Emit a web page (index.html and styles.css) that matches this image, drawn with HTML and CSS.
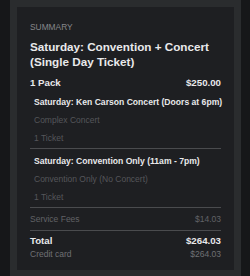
FILE: index.html
```html
<!DOCTYPE html>
<html lang="en">
<head>
  <meta charset="UTF-8" />
  <meta name="viewport" content="width=device-width, initial-scale=1" />
  <title>Order Summary</title>
  <link rel="stylesheet" href="styles.css">
</head>
<body>
  <div class="frame">
    <div class="summary-card">
      <div class="summary-label">SUMMARY</div>
      <h2 class="event-title">Saturday: Convention + Concert (Single Day Ticket)</h2>

      <div class="row pack-row">
        <span>1 Pack</span>
        <span>$250.00</span>
      </div>

      <!-- items dentro del pack -->
      <div class="pack-item">
        <div class="item-name">Saturday: Ken Carson Concert (Doors at 6pm)</div>
        <div class="item-sub">Complex Concert</div>
        <div class="item-sub">1 Ticket</div>
      </div>
      <div class="pack-item">
        <div class="item-name">Saturday: Convention Only (11am - 7pm)</div>
        <div class="item-sub">Convention Only (No Concert)</div>
        <div class="item-sub">1 Ticket</div>
      </div>

      <div class="row fees-row">
        <span>Service Fees</span>
        <span>$14.03</span>
      </div>

      <div class="totals">
        <div class="row total-row">
          <span>Total</span>
          <span>$264.03</span>
        </div>
        <div class="row method-row">
          <span>Credit card</span>
          <span>$264.03</span>
        </div>
      </div>
    </div>
  </div>
</body>
</html>
```

FILE: styles.css
```css
body {
  margin: 0;
  background: #161719;
  font-family: "Liberation Sans", Arial, sans-serif;
  color: #e9e9eb;
}

.frame {
  margin: 0 9px 0 10px;
  background: #2a2c2e;
  padding: 7px 7px 0 7px;
  height: 276px;
  box-sizing: border-box;
}

.summary-card {
  background: #1e1f22;
  padding: 14px 13px 10px 13px;
}

.summary-label {
  font-size: 8.4px;
  color: #86878a;
  line-height: 12px;
}

.event-title {
  margin: 6px 0 0 0;
  font-size: 11.7px;
  line-height: 15px;
  font-weight: bold;
}

.row {
  display: flex;
  justify-content: space-between;
}

.pack-row {
  margin-top: 7px;
  font-size: 9.7px;
  font-weight: bold;
  line-height: 14px;
}

.pack-item {
  padding: 6px 0 4px 4px;
  border-bottom: 1px solid #4a4b4e;
}

.item-name {
  font-size: 8.6px;
  font-weight: bold;
  line-height: 12px;
  white-space: nowrap;
}

.item-sub {
  font-size: 8.5px;
  color: #55565a;
  line-height: 12px;
  margin-top: 6px;
}

.fees-row {
  padding: 5px 0;
  font-size: 8.5px;
  color: #616266;
  line-height: 12px;
  border-bottom: 1px solid #4a4b4e;
}

.totals {
  padding-top: 3px;
}

.total-row {
  font-size: 9.7px;
  font-weight: bold;
  line-height: 14px;
}

.method-row {
  font-size: 8.5px;
  color: #6f7074;
  line-height: 12px;
}
```
